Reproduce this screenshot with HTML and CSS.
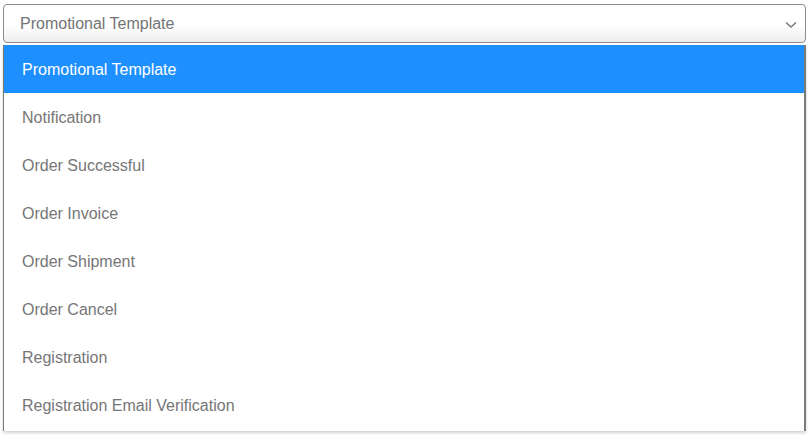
FILE: index.html
```html
<!DOCTYPE html>
<html>
<head>
<meta charset="utf-8">
<link rel="stylesheet" href="styles.css">
</head>
<body>
<div class="page">
  <div class="select">
    <span class="value">Promotional Template</span>
    <svg class="chev" width="12" height="8" viewBox="0 0 12 8"><path d="M1 1.5 L6 6 L11 1.5" fill="none" stroke="#7a7a7a" stroke-width="1.6"/></svg>
  </div>
  <ul class="list">
    <li class="item active">Promotional Template</li>
    <li class="item">Notification</li>
    <li class="item">Order Successful</li>
    <li class="item">Order Invoice</li>
    <li class="item">Order Shipment</li>
    <li class="item">Order Cancel</li>
    <li class="item">Registration</li>
    <li class="item">Registration Email Verification</li>
  </ul>
</div>
</body>
</html>
```
FILE: styles.css
```css
html, body {
  margin: 0;
  padding: 0;
  background: #ffffff;
  font-family: "Liberation Sans", Arial, sans-serif;
}
.page {
  width: 808px;
  height: 435px;
  padding: 4px 2px 0 3px;
  box-sizing: border-box;
  overflow: hidden;
}
.select {
  height: 39px;
  border: 1px solid #8c8c8c;
  border-radius: 4px;
  box-sizing: border-box;
  background: linear-gradient(#ffffff 0%, #ffffff 55%, #ededed 100%);
  display: flex;
  align-items: center;
  justify-content: space-between;
  padding: 1px 8px 0 16px;
}
.value {
  font-size: 16px;
  color: #747474;
}
.chev {
  display: block;
  margin-top: 1px;
}
.list {
  list-style: none;
  margin: 2px 0 0 0;
  padding: 0 0 2px 0;
  border-left: 1px solid #7a7a7a;
  border-right: 2px solid #7a7a7a;
  box-shadow: 0 2px 3px rgba(0,0,0,0.18);
  background: #fff;
}
.item {
  height: 48px;
  box-sizing: border-box;
  display: flex;
  align-items: center;
  padding: 2px 0 0 18px;
  font-size: 16px;
  color: #767676;
}
.item.active {
  background: #1e8fff;
  color: #ffffff;
}
```
